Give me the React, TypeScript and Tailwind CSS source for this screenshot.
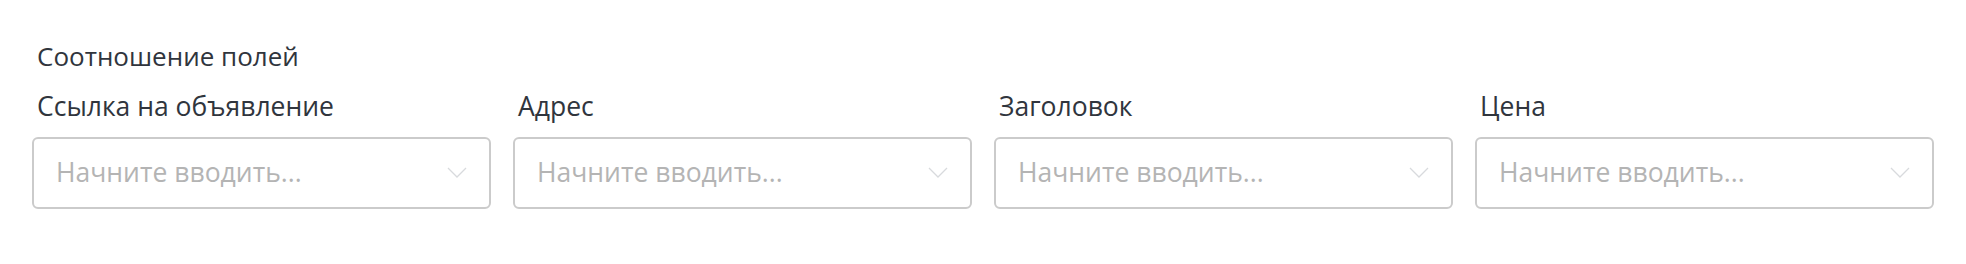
import React from 'react';

const fields = ['Ссылка на объявление', 'Адрес', 'Заголовок', 'Цена'];

const Chevron: React.FC = () => (
  <svg width="20" height="12" viewBox="0 0 20 12" fill="none" className="shrink-0">
    <path d="M1 1l9 9 9-9" stroke="#d8dadd" strokeWidth="1.3" />
  </svg>
);

const App: React.FC = () => {
  return (
    <div className="min-h-screen bg-white px-8 pt-[39px] font-['Open_Sans',sans-serif]">
      <h3 className="pl-[5px] text-[26px] leading-[34px] text-[#30353d]">Соотношение полей</h3>
      <div className="mt-[16px] grid grid-cols-4 gap-x-[22px]">
        {fields.map((label) => (
          <div key={label}>
            <div className="pl-[5px] text-[26.5px] leading-[34px] text-[#30353d]">{label}</div>
            <div className="mt-[14px] flex h-[72px] items-center justify-between rounded-[6px] border-2 border-[#cbcbcb] pl-[22px] pr-[22px]">
              <span className="text-[26.5px] text-[#b4b4b4]">Начните вводить...</span>
              <Chevron />
            </div>
          </div>
        ))}
      </div>
    </div>
  );
};

export default App;
